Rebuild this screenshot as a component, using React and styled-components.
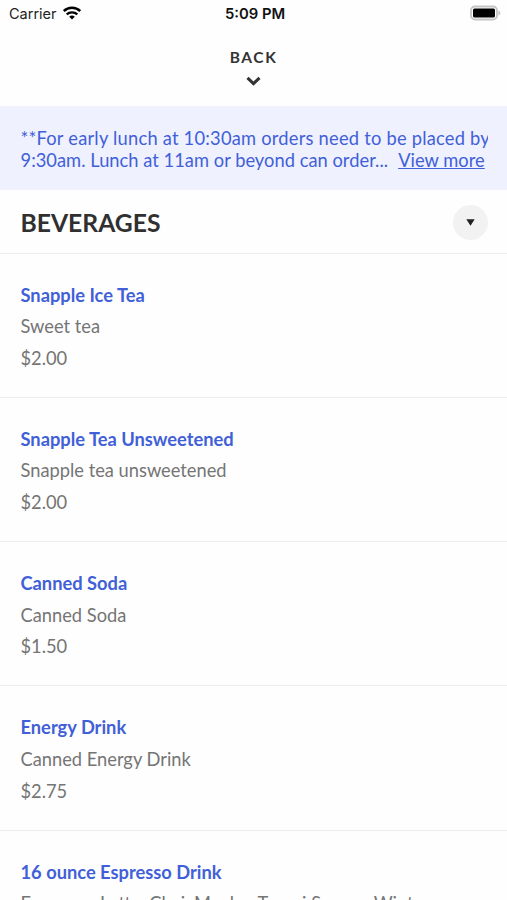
import React, { useState } from "react";
import styled, { createGlobalStyle } from "styled-components";

const menuItems = [
  { name: "Snapple Ice Tea", description: "Sweet tea", price: "$2.00" },
  {
    name: "Snapple Tea Unsweetened",
    description: "Snapple tea unsweetened",
    price: "$2.00",
  },
  { name: "Canned Soda", description: "Canned Soda", price: "$1.50" },
  { name: "Energy Drink", description: "Canned Energy Drink", price: "$2.75" },
  {
    name: "16 ounce Espresso Drink",
    description: "Espresso, Latte, Chai, Mocha, Torani Syrups, Winter",
    price: "$4.00",
  },
];

function WifiIcon() {
  return (
    <svg width="18" height="14" viewBox="0 0 18 14" fill="none">
      <path d="M0.8 5C5.2 0.6 12.8 0.6 17.2 5" stroke="#000" strokeWidth="2.6" />
      <path
        d="M3.7 8.3C6.5 5.6 11.5 5.6 14.3 8.3"
        stroke="#000"
        strokeWidth="2.3"
      />
      <path d="M6.2 10.7Q9 8.5 11.8 10.7L9 13.5Z" fill="#000" />
    </svg>
  );
}

function BatteryIcon() {
  return (
    <svg width="31" height="16" viewBox="0 0 31 16">
      <rect
        x="1"
        y="1.5"
        width="26"
        height="13"
        rx="4"
        fill="#fff"
        stroke="#c4c4c4"
        strokeWidth="1.8"
      />
      <rect x="3" y="3.5" width="22" height="9" rx="1.5" fill="#000" />
      <path d="M28.4 5.5C31 6.5 31 9.5 28.4 10.5Z" fill="#c4c4c4" />
    </svg>
  );
}

function App() {
  const [open, setOpen] = useState(true);

  return (
    <Container>
      <GlobalStyle />
      <StatusBar>
        <Carrier>
          Carrier
          <WifiIcon />
        </Carrier>
        <Clock>5:09 PM</Clock>
        <Battery>
          <BatteryIcon />
        </Battery>
      </StatusBar>
      <BackButton>
        BACK
        <svg width="16" height="10" viewBox="0 0 16 10" fill="none">
          <path d="M1.5 1.8L7.5 7.6L13.5 1.8" stroke="#333" strokeWidth="3" />
        </svg>
      </BackButton>
      <Notice>
        <NoticeLine $spacing="0.23px">
          **For early lunch at 10:30am orders need to be placed by
        </NoticeLine>
        <NoticeLine $spacing="0.03px">
          9:30am. Lunch at 11am or beyond can order...
          <ViewMore>View more</ViewMore>
        </NoticeLine>
      </Notice>
      <SectionHeader>
        <SectionTitle>BEVERAGES</SectionTitle>
        <ToggleButton onClick={() => setOpen(!open)}>
          <svg width="9" height="7" viewBox="0 0 9 7">
            <path d="M0.3 0.3H8.7L4.5 6.8Z" fill="#222" />
          </svg>
        </ToggleButton>
      </SectionHeader>
      {open &&
        menuItems.map((item) => (
          <MenuItem key={item.name}>
            <ItemName>{item.name}</ItemName>
            <ItemText>{item.description}</ItemText>
            <ItemText>{item.price}</ItemText>
          </MenuItem>
        ))}
    </Container>
  );
}

const GlobalStyle = createGlobalStyle`
  body {
    margin: 0;
    background: #fefefe;
  }
  * {
    box-sizing: border-box;
  }
`;

const Container = styled.div`
  height: 100vh;
  overflow: hidden;
  background: #fefefe;
  font-family: "Lato", sans-serif;
  font-size: 18.3px;
`;

const StatusBar = styled.div`
  display: grid;
  grid-template-columns: 1fr auto 1fr;
  align-items: center;
  height: 28px;
  padding: 0 6px 0 9px;
  font-family: "Inter", sans-serif;
`;

const Carrier = styled.div`
  display: flex;
  align-items: center;
  gap: 6px;
  padding-bottom: 2px;
  color: #222;
  font-size: 14.5px;
`;

const Clock = styled.div`
  color: #111;
  font-size: 14.8px;
  font-weight: 600;
`;

const Battery = styled.div`
  display: flex;
  justify-content: flex-end;
  padding-bottom: 2px;
`;

const BackButton = styled.button`
  display: flex;
  flex-direction: column;
  align-items: center;
  justify-content: flex-start;
  gap: 9px;
  width: 100%;
  height: 78px;
  padding: 19px 0 0;
  border: none;
  background: none;
  color: #333;
  font-family: inherit;
  font-size: 15.5px;
  font-weight: 700;
  line-height: 20px;
  letter-spacing: 1.6px;
  cursor: pointer;
`;

const Notice = styled.div`
  height: 84px;
  padding: 21px 19px 0 20.5px;
  background: #eff1fe;
  color: #4160d8;
`;

const NoticeLine = styled.div`
  overflow: hidden;
  line-height: 22px;
  letter-spacing: ${(props) => props.$spacing};
  white-space: nowrap;
`;

const ViewMore = styled.a`
  margin-left: 10px;
  text-decoration: underline;
  cursor: pointer;
`;

const SectionHeader = styled.div`
  display: flex;
  align-items: center;
  justify-content: space-between;
  height: 63.5px;
  padding: 2px 19px 0 20.5px;
  border-bottom: 1px solid #ededed;
`;

const SectionTitle = styled.h2`
  margin: 0;
  color: #303030;
  font-size: 24.7px;
  font-weight: 700;
`;

const ToggleButton = styled.button`
  display: flex;
  align-items: center;
  justify-content: center;
  width: 35px;
  height: 35px;
  padding: 0;
  border: none;
  border-radius: 50%;
  background: #f2f2f2;
  cursor: pointer;
`;

const MenuItem = styled.div`
  height: 144.25px;
  padding: 26px 20.5px 0;
  border-bottom: 1px solid #ededed;
  white-space: nowrap;
`;

const ItemName = styled.div`
  color: #4160d8;
  font-weight: 700;
  line-height: 31.7px;
`;

const ItemText = styled.div`
  color: #757575;
  line-height: 31.7px;
`;

export default App;
